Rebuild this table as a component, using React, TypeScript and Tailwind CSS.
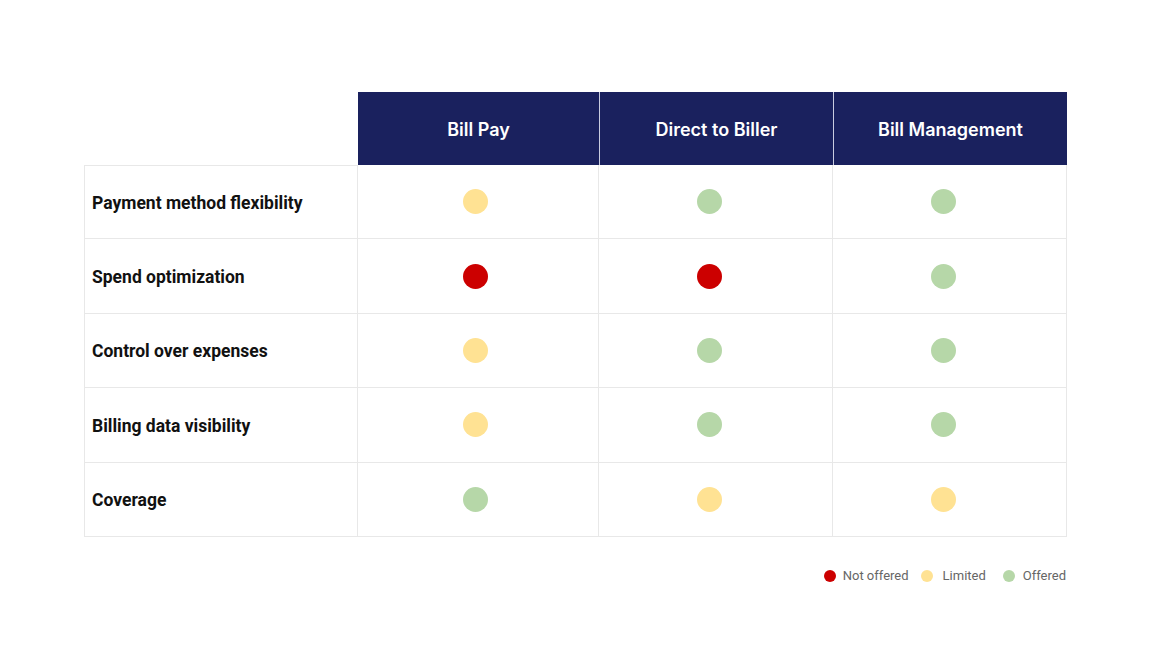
const columns = ["Bill Pay", "Direct to Biller", "Bill Management"];

type Level = "no" | "limited" | "yes";

const rows: { label: string; values: Level[] }[] = [
	{ label: "Payment method flexibility", values: ["limited", "yes", "yes"] },
	{ label: "Spend optimization", values: ["no", "no", "yes"] },
	{ label: "Control over expenses", values: ["limited", "yes", "yes"] },
	{ label: "Billing data visibility", values: ["limited", "yes", "yes"] },
	{ label: "Coverage", values: ["yes", "limited", "limited"] },
];

const dotColor: Record<Level, string> = {
	no: "bg-[#cc0000]",
	limited: "bg-[#ffe293]",
	yes: "bg-[#b6d7a8]",
};

const widths = ["w-[241px]", "w-[234px]", "w-[234px]"];

const Dot = ({ level, size = "big" }: { level: Level; size?: "big" | "small" }) => (
	<span
		className={`${dotColor[level]} inline-block rounded-full ${size === "big" ? "w-[25px] h-[25px]" : "w-[12px] h-[12px]"}`}
	/>
);

export default function App() {
	return (
		<div className="w-[1152px] h-[648px] bg-white font-['Roboto',sans-serif]">
			<div className="pt-[92px] pl-[84px]">
				{/* header */}
				<div className="flex">
					<div className="w-[274px]" />
					{columns.map((c, i) => (
						<div
							key={c}
							className={`${widths[i]} h-[73px] bg-[#1a215e] flex items-center justify-center pt-[2px] text-white text-[18px] font-semibold font-['Inter',sans-serif] ${i > 0 ? "border-l border-[#c9cce0]" : ""}`}
						>
							{c}
						</div>
					))}
				</div>

				{/* body */}
				{rows.map((r, ri) => (
					<div key={r.label} className="flex">
						<div
							className={`w-[274px] h-[74.4px] border-l border-r border-b border-[#e8e8e8] ${ri === 0 ? "border-t" : ""} flex items-center pl-[7px] pt-[2px] text-[17.5px] font-bold text-[#111]`}
						>
							{r.label}
						</div>
						{r.values.map((v, ci) => (
							<div
								key={ci}
								className={`${widths[ci]} h-[74.4px] border-r border-b border-[#e8e8e8] flex items-center justify-center ${ci === 0 ? "pr-[5px]" : "pr-[12px]"}`}
							>
								<Dot level={v} />
							</div>
						))}
					</div>
				))}

				{/* legend */}
				<div className="w-[983px] flex justify-end items-center mt-[29px] pr-[1px] text-[13px] text-[#666]">
					<div className="flex items-center gap-[7px]">
						<Dot level="no" size="small" />
						<span>Not offered</span>
					</div>
					<div className="flex items-center gap-[10px] ml-[12px]">
						<Dot level="limited" size="small" />
						<span>Limited</span>
					</div>
					<div className="flex items-center gap-[8px] ml-[17px]">
						<Dot level="yes" size="small" />
						<span>Offered</span>
					</div>
				</div>
			</div>
		</div>
	);
}
